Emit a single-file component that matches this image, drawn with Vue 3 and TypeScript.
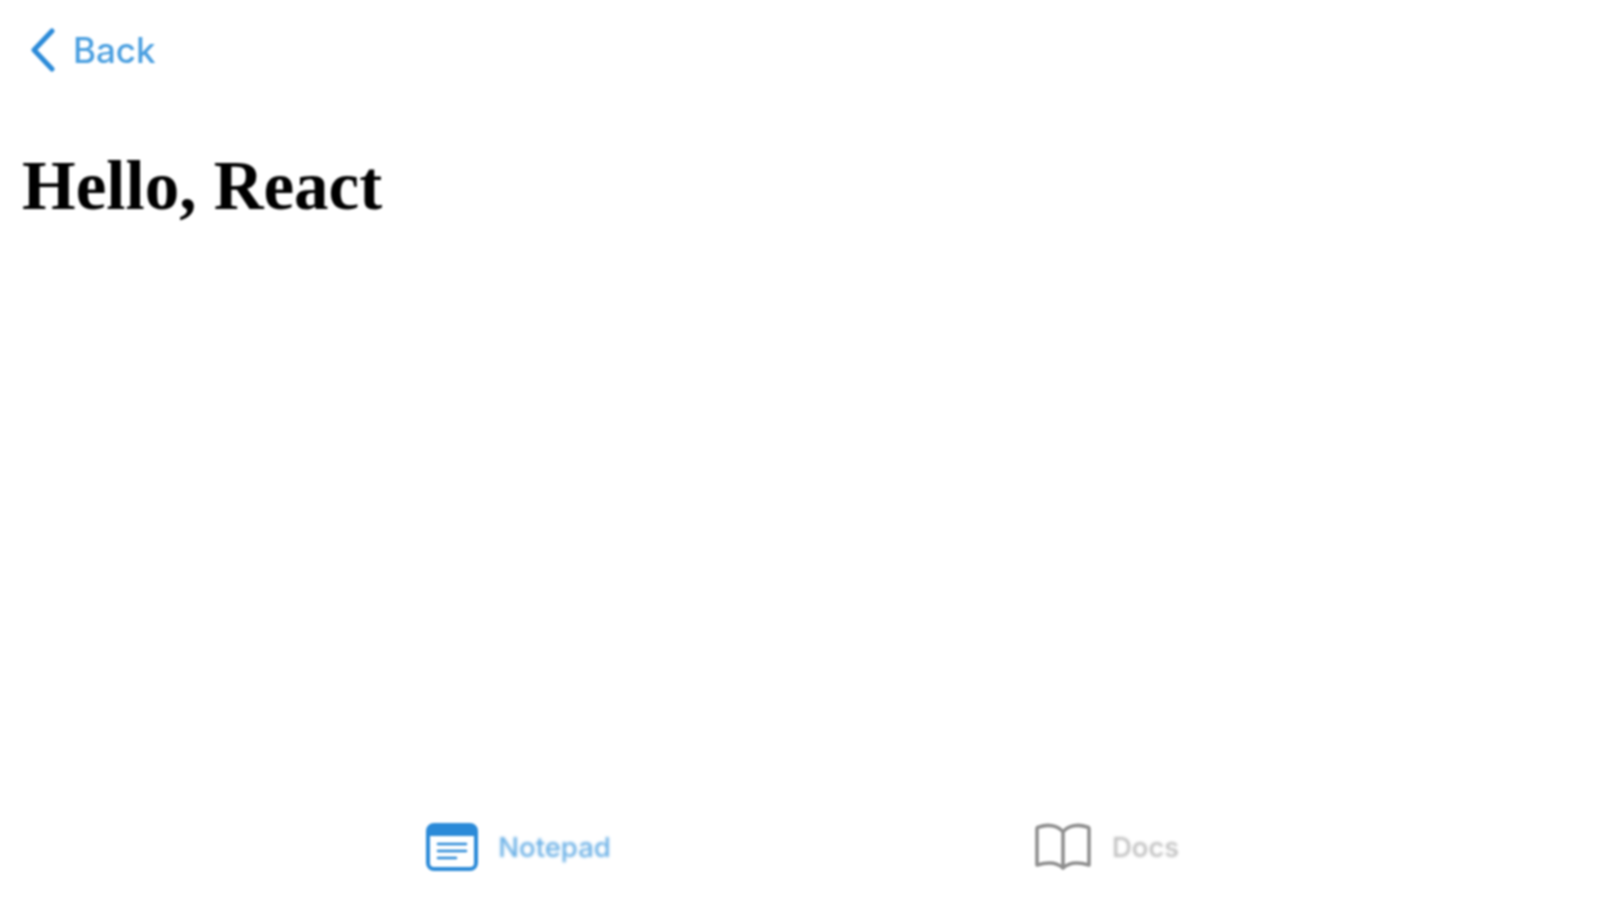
<script setup lang="ts">
// Two-tab demo page: back link, heading, bottom tab bar.
const title = 'Hello, React'
</script>

<template>
  <div class="page">
    <header class="nav">
      <a class="nav__back">
        <svg class="nav__chevron" viewBox="0 0 28 44" width="28" height="44">
          <path d="M23 3 5 22l18 19" fill="none" stroke="currentColor" stroke-width="5" stroke-linecap="round" stroke-linejoin="round" />
        </svg>
        <span>Back</span>
      </a>
    </header>
    <h1 class="title">{{ title }}</h1>
    <nav class="tabs">
      <a class="tab tab--active">
        <svg class="tab__icon" viewBox="0 0 52 48" width="52" height="48">
          <rect x="2" y="2" width="48" height="44" rx="6" fill="#fff" stroke="currentColor" stroke-width="4" />
          <path d="M2 8a6 6 0 0 1 6-6h36a6 6 0 0 1 6 6v5H2z" fill="currentColor" />
          <path d="M12 21h28M12 28h28M12 35h18" stroke="currentColor" stroke-width="2.6" stroke-linecap="round" />
        </svg>
        <span>Notepad</span>
      </a>
      <a class="tab">
        <svg class="tab__icon" viewBox="0 0 58 48" width="58" height="48">
          <path d="M29 9C24 2 13 1 5 4a2 2 0 0 0-2 2v36c10-3 20-3 26 3 6-6 16-6 26-3V6a2 2 0 0 0-2-2C45 1 34 2 29 9zM29 9v36" fill="none" stroke="currentColor" stroke-width="3.6" stroke-linejoin="round" />
        </svg>
        <span>Docs</span>
      </a>
    </nav>
  </div>
</template>

<style scoped>
.page {
  display: flex;
  flex-direction: column;
  height: 900px;
  overflow: hidden;
  filter: blur(1.1px);
  background: #fff;
}
.nav {
  display: flex;
  align-items: center;
  height: 100px;
  padding-left: 29px;
}
.nav__back {
  display: flex;
  align-items: center;
  gap: 16px;
  font-family: Inter, "Liberation Sans", sans-serif;
  font-size: 35px;
  font-weight: 500;
  color: #4a9fe0;
}
.nav__chevron {
  color: #2b8ad8;
}
.title {
  margin: 46px 0 0 22px;
  font-family: "Liberation Serif", serif;
  font-size: 69px;
  font-weight: 700;
  line-height: 80px;
  color: #000;
}
.tabs {
  display: grid;
  grid-template-columns: 588px 588px;
  justify-content: center;
  margin-top: auto;
  height: 106px;
  padding-left: 26px;
}
.tab {
  display: flex;
  align-items: center;
  justify-content: center;
  gap: 20px;
  font-family: Inter, "Liberation Sans", sans-serif;
  font-size: 27.5px;
  font-weight: 500;
  color: #bdbdbd;
}
.tab span {
  filter: blur(0.8px);
}
.tab--active {
  color: #6ab0e6;
}
.tab__icon {
  color: #8f8f8f;
}
.tab--active .tab__icon {
  color: #2b8ad8;
}
</style>
